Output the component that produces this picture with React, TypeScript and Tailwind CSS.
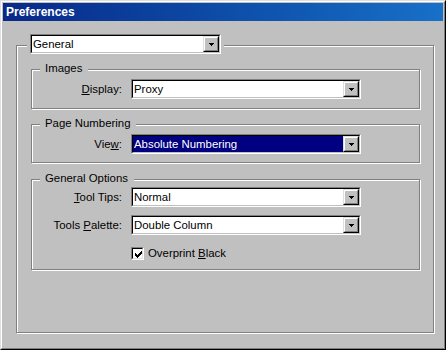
import React from 'react';

const font = "font-['Liberation_Sans',Arial,sans-serif]";

const Arrow = () => (
  <svg width="7" height="4" viewBox="0 0 7 4" shapeRendering="crispEdges">
    <rect x="1" y="0" width="5" height="1" fill="#000" />
    <rect x="2" y="1" width="3" height="1" fill="#000" />
    <rect x="3" y="2" width="1" height="1" fill="#000" />
  </svg>
);

const Combo = ({ value, className, selected }: { value: string; className?: string; selected?: boolean }) => (
  <div
    className={`h-[20px] border border-t-[#808080] border-l-[#808080] border-b-[#ffffff] border-r-[#ffffff] ${className ?? ''}`}
  >
    <div className="h-full border border-t-[#000] border-l-[#000] border-b-[#c0c0c0] border-r-[#c0c0c0] bg-white flex">
      <div
        className={`flex-1 flex items-center pl-[1px] text-[11.4px] leading-[14px] ${
          selected ? 'bg-[#000080] text-white' : 'text-black'
        }`}
      >
        {value}
      </div>
      <div className="w-[16px] h-full border border-t-[#dfdfdf] border-l-[#dfdfdf] border-b-[#000] border-r-[#000]">
        <div className="h-full border border-t-[#fff] border-l-[#fff] border-b-[#808080] border-r-[#808080] bg-[#c0c0c0] flex items-center justify-center pt-[1px]">
          <Arrow />
        </div>
      </div>
    </div>
  </div>
);

const Label = ({ before, key_, after }: { before: string; key_: string; after: string }) => (
  <span className="text-right text-[11.4px] leading-[14px] text-black">
    {before}
    <span className="underline underline-offset-[1px]">{key_}</span>
    {after}
  </span>
);

const GroupBox = ({ title, className, children }: { title: string; className?: string; children: React.ReactNode }) => (
  <div
    className={`relative ml-[14px] w-[389px] border border-[#808080] shadow-[inset_1px_1px_0_#fff,1px_1px_0_#fff] ${className ?? ''}`}
  >
    <span className="absolute left-[8px] top-[-8px] bg-[#c0c0c0] pl-[5px] pr-[6px] text-[11.4px] leading-[13px] text-black">
      {title}
    </span>
    {children}
  </div>
);

const Check = () => (
  <div className="w-[13px] h-[13px] border border-t-[#808080] border-l-[#808080] border-b-[#fff] border-r-[#fff]">
    <div className="w-full h-full border border-t-[#000] border-l-[#000] border-b-[#dfdfdf] border-r-[#dfdfdf] bg-white pl-[2px] pt-[2px]">
      <svg width="7" height="7" viewBox="0 0 7 7" shapeRendering="crispEdges">
        <path
          fill="#000"
          d="M6 0h1v3h-1zM5 1h1v3h-1zM4 2h1v3h-1zM3 3h1v3h-1zM2 4h1v3h-1zM1 3h1v3h-1zM0 2h1v3h-1z"
        />
      </svg>
    </div>
  </div>
);

export default function App() {
  return (
    <div className={`${font} w-[446px] h-[350px] border border-t-[#dfdfdf] border-l-[#dfdfdf] border-b-[#000] border-r-[#000]`}>
      <div className="w-full h-full border border-t-[#fff] border-l-[#fff] border-b-[#808080] border-r-[#808080] bg-[#c0c0c0] p-[1px]">
        {/* title bar */}
        <div className="h-[18px] bg-gradient-to-r from-[#0a2888] to-[#1870c8] flex items-center pl-[3px]">
          <span className="text-white font-bold text-[12px] leading-[14px]">Preferences</span>
        </div>

        {/* outer frame with the panel chooser on its top edge */}
        <div className="relative mt-[24px] ml-[13px] w-[418px] h-[288px] border border-[#808080] shadow-[inset_1px_1px_0_#fff,1px_1px_0_#fff]">
          <div className="absolute left-[10px] top-[-12px] bg-[#c0c0c0] px-[3px]">
            <Combo value="General" className="w-[191px]" />
          </div>

          <GroupBox title="Images" className="mt-[23px]">
            <div className="grid grid-cols-[90px_230px] gap-x-[9px] items-center pt-[9px] pb-[9px]">
              <Label before="" key_="D" after="isplay:" />
              <Combo value="Proxy" />
            </div>
          </GroupBox>

          <GroupBox title="Page Numbering" className="mt-[15px]">
            <div className="grid grid-cols-[90px_230px] gap-x-[9px] items-center pt-[9px] pb-[8px]">
              <Label before="Vie" key_="w" after=":" />
              <Combo value="Absolute Numbering" selected />
            </div>
          </GroupBox>

          <GroupBox title="General Options" className="mt-[16px]">
            <div className="grid grid-cols-[90px_230px] gap-x-[9px] gap-y-[8px] items-center pt-[7px] pb-[9px]">
              <Label before="" key_="T" after="ool Tips:" />
              <Combo value="Normal" />
              <Label before="Tools " key_="P" after="alette:" />
              <Combo value="Double Column" />
              <div className="col-start-2 mt-[4px] flex items-center gap-[4px]">
                <Check />
                <span className="text-[11.4px] leading-[13px] text-black">
                  Overprint <span className="underline underline-offset-[1px]">B</span>lack
                </span>
              </div>
            </div>
          </GroupBox>
        </div>
      </div>
    </div>
  );
}
